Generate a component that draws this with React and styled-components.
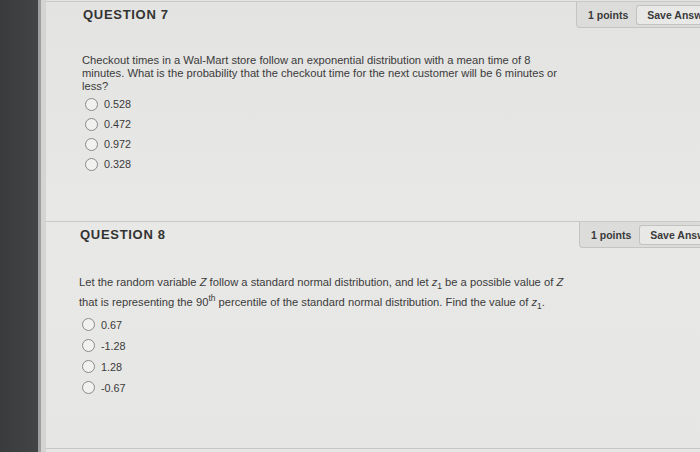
import React from "react";
import styled, { createGlobalStyle } from "styled-components";

const Global = createGlobalStyle`
  html, body { margin: 0; padding: 0; background: #e5e5e3; }
  body { font-family: "Liberation Sans", Arial, sans-serif; }
`;

const Page = styled.div`
  display: flex;
  width: 700px;
  height: 452px;
  overflow: hidden;
`;

const Sidebar = styled.div`
  width: 38px;
  flex: none;
  background: linear-gradient(90deg, #3a3b3d 0%, #434446 100%);
`;

const Edge = styled.div`
  width: 3px;
  flex: none;
  background: #9e9fa0;
`;

const Gutter = styled.div`
  width: 5px;
  flex: none;
  background: #d4d4d3;
`;

const Main = styled.div`
  flex: 1;
  min-width: 0;
  padding-top: 1px;
  background: linear-gradient(180deg, #e3e3e1 0%, #e8e8e6 50%, #e6e6e4 100%);
  display: flex;
  flex-direction: column;
`;

const Question = styled.section`
  box-sizing: border-box;
  height: ${(p) => p.$height}px;
  flex: none;
  border-top: 1px solid #c9c9c7;
  padding-left: ${(p) => p.$indent}px;
  ${(p) => (p.$last ? "border-bottom: 1px solid #c6c6c4;" : "")}
`;

const Header = styled.div`
  display: flex;
  align-items: center;
  justify-content: space-between;
  height: 26px;
`;

const Title = styled.h2`
  margin: 0 0 1px ${(p) => p.$shift}px;
  font-size: 13px;
  font-weight: bold;
  letter-spacing: 0.7px;
  color: #333;
`;

const PointsBox = styled.div`
  display: flex;
  align-items: center;
  gap: 8px;
  height: 26px;
  width: ${(p) => p.$width}px;
  box-sizing: border-box;
  padding-left: 11px;
  background: #dcdcdb;
  border: 1px solid #c4c4c3;
  border-top: none;
  border-right: none;
  border-radius: 0 0 0 4px;
  overflow: hidden;
  white-space: nowrap;
`;

const Points = styled.span`
  font-size: 10.5px;
  font-weight: bold;
  color: #3a3a3a;
`;

const SaveButton = styled.button`
  height: 20px;
  padding: 0 10px;
  background: #e8e8e7;
  border: 1px solid #c2c2c1;
  border-right: none;
  border-radius: 3px 0 0 3px;
  font-family: "Liberation Sans", Arial, sans-serif;
  font-size: 10.5px;
  font-weight: bold;
  color: #3a3a3a;
  white-space: nowrap;
`;

const Body = styled.p`
  margin: ${(p) => p.$top}px 0 0;
  width: ${(p) => p.$width}px;
  font-size: 11.2px;
  line-height: ${(p) => p.$lh}px;
  color: #3b3b3b;
`;

const Options = styled.div`
  display: flex;
  flex-direction: column;
  margin-top: ${(p) => p.$top}px;
`;

const Option = styled.label`
  display: flex;
  align-items: center;
  gap: 6px;
  height: ${(p) => p.$h}px;
  padding-left: 3px;
  font-size: 10.8px;
  color: #3b3b3b;
`;

const Radio = styled.span`
  width: 11px;
  height: 11px;
  border-radius: 50%;
  border: 1px solid #8a8a8a;
  background: #f1f1f0;
  flex: none;
`;

const Sup = styled.sup`
  font-size: 8.5px;
  line-height: 0;
  vertical-align: 5px;
`;

const Sub = styled.sub`
  font-size: 8.5px;
  line-height: 0;
  vertical-align: -3px;
`;

const Filler = styled.div`
  flex: 1;
`;

function Choices({ items, top, h }) {
  return (
    <Options $top={top}>
      {items.map((t) => (
        <Option key={t} $h={h}>
          <Radio />
          {t}
        </Option>
      ))}
    </Options>
  );
}

export default function App() {
  return (
    <>
      <Global />
      <Page>
        <Sidebar />
        <Edge />
        <Gutter />
        <Main>
          <Question $indent={36} $height={220}>
            <Header>
              <Title $shift={1}>QUESTION 7</Title>
              <PointsBox $width={124}>
                <Points>1 points</Points>
                <SaveButton>Save Answer</SaveButton>
              </PointsBox>
            </Header>
            <Body $top={26} $lh={13} $width={482}>
              Checkout times in a Wal-Mart store follow an exponential distribution with a mean time of 8
              minutes. What is the probability that the checkout time for the next customer will be 6 minutes or
              less?
            </Body>
            <Choices items={["0.528", "0.472", "0.972", "0.328"]} top={1} h={20} />
          </Question>
          <Question $indent={33} $height={228} $last>
            <Header>
              <Title $shift={1}>QUESTION 8</Title>
              <PointsBox $width={121}>
                <Points>1 points</Points>
                <SaveButton>Save Answer</SaveButton>
              </PointsBox>
            </Header>
            <Body $top={24} $lh={20} $width={500}>
              Let the random variable <i>Z</i> follow a standard normal distribution, and let <i>z</i>
              <Sub>1</Sub> be a possible value of <i>Z</i> that is representing the 90<Sup>th</Sup> percentile
              of the standard normal distribution. Find the value of <i>z</i>
              <Sub>1</Sub>.
            </Body>
            <Choices items={["0.67", "-1.28", "1.28", "-0.67"]} top={2} h={21} />
          </Question>
          <Filler />
        </Main>
      </Page>
    </>
  );
}
